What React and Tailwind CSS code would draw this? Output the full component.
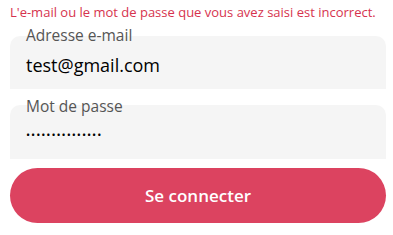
export default function App() {
  return (
    <div className="w-[393px] h-[235px] bg-white overflow-hidden font-['Open_Sans',sans-serif]">
      <p className="pl-[10px] pt-[3px] text-[13px] leading-[18px] text-[#d6334e]">
        L'e-mail ou le mot de passe que vous avez saisi est incorrect.
      </p>
      <div className="ml-[10px] w-[376px] mt-[15px] relative">
        <div className="h-[53px] bg-[#f5f5f5] rounded-t-[10px] pl-[16px] pt-[17px] text-[18px] leading-[24px] text-black">
          test@gmail.com
        </div>
        <span className="absolute left-[16px] top-[-12px] text-[15.5px] text-[#555]">Adresse e-mail</span>
      </div>
      <div className="ml-[10px] w-[376px] mt-[16px] relative">
        <div className="h-[54px] bg-[#f5f5f5] rounded-t-[10px] pl-[16px] pt-[18px] text-[11px] leading-[24px] text-black tracking-[0.95px]">
          •••••••••••••••
        </div>
        <span className="absolute left-[16px] top-[-10px] text-[15.5px] text-[#555]">Mot de passe</span>
      </div>
      <button className="ml-[10px] mt-[9px] w-[376px] h-[55px] rounded-full bg-[#dc4360] text-white text-[17px] font-semibold">
        Se connecter
      </button>
    </div>
  );
}
